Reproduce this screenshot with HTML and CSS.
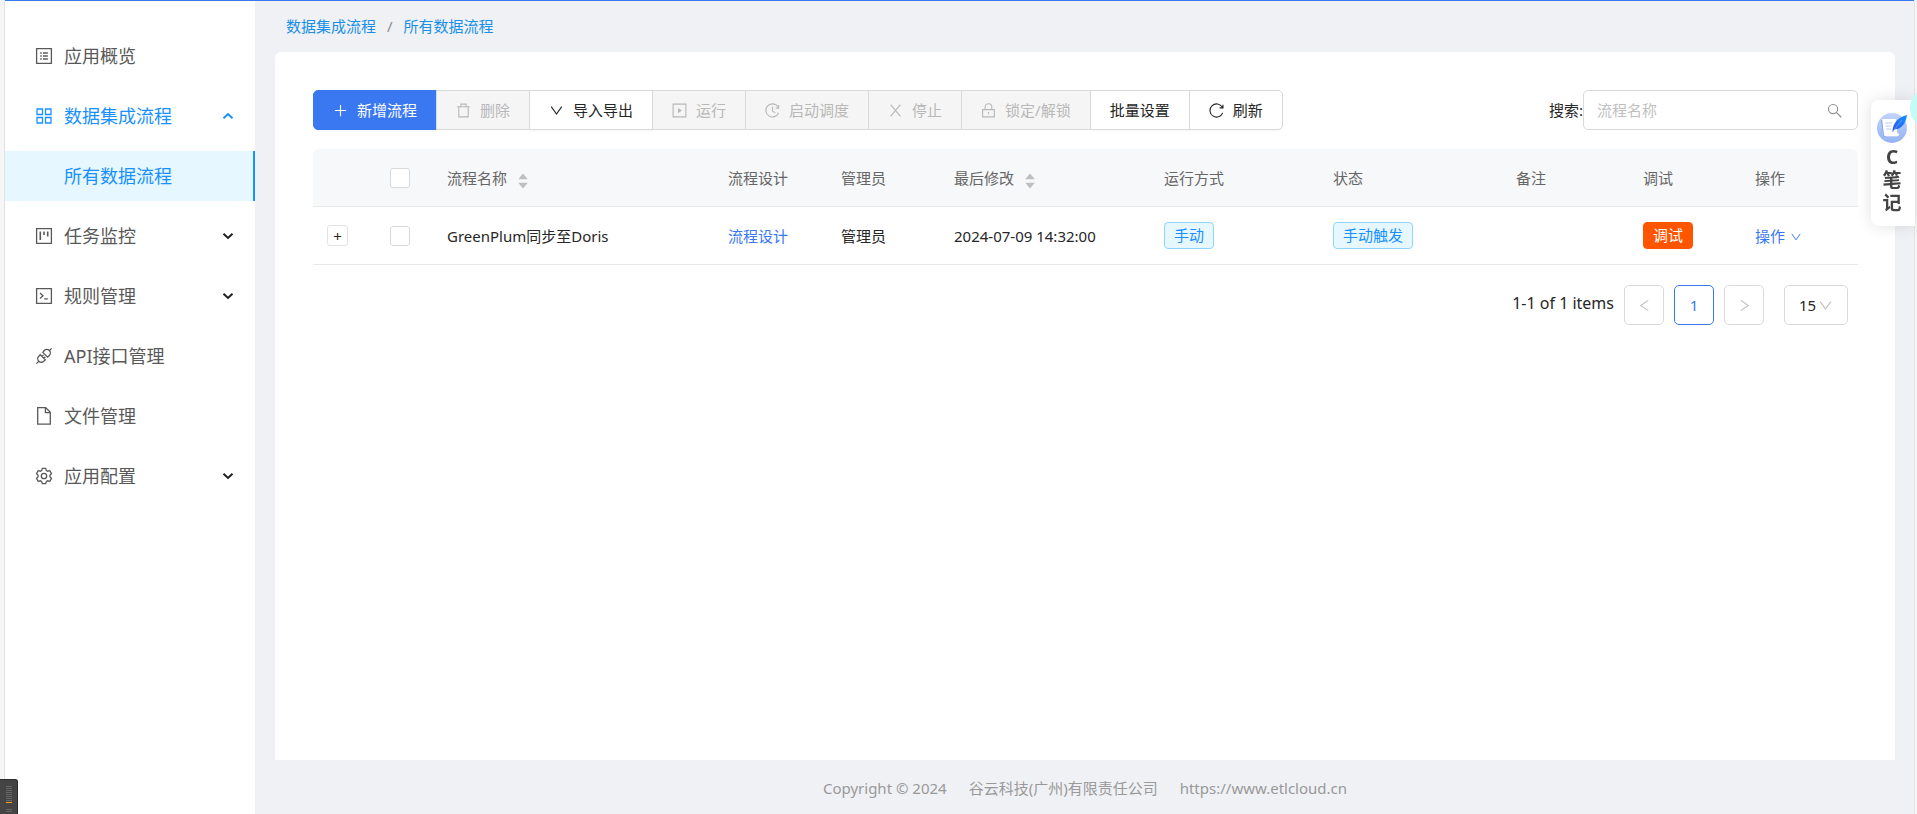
FILE: index.html
```html
<!DOCTYPE html>
<html lang="zh-CN">
<head>
<meta charset="utf-8">
<title>所有数据流程</title>
<link rel="stylesheet" href="styles.css">
</head>
<body>
<svg class="sprite" aria-hidden="true">
  <symbol id="i-profile" viewBox="0 0 16 16"><path d="M.6.6h14.8v14.8H.6z"/><path d="M4.2 5h1.5M4.2 8h1.5M4.2 11h1.5M7 5h4.8M7 8h4.8M7 11h4.8"/></symbol>
  <symbol id="i-grid" viewBox="0 0 16 16"><path d="M1 1h5.5v5.5H1zM9.5 1H15v5.500H9.500zM1 9.500h5.500V15H1zM9.500 9.500H15V15H9.500z"/></symbol>
  <symbol id="i-project" viewBox="0 0 16 16"><path d="M.6.6h14.8v14.8H.6z"/><path d="M4.3 3.5v8.5M8 3.5v3.5M11.7 3.5v5" stroke-width="1.6"/></symbol>
  <symbol id="i-code" viewBox="0 0 16 16"><path d="M.6.6h14.8v14.8H.6z"/><path d="M4 5l3 2.8-3 2.8M8.2 10.8h3.6"/></symbol>
  <symbol id="i-api" viewBox="0 0 16 16"><path d="M.4 15.6l2.3-2.3M13.3 2.7L15.6.4M4.3 6.7l5 5-1.5 1.5a3.5 3.5 0 0 1-5-5zM6.8 4.4l4.8 4.8 1.7-1.7a3.5 3.5 0 0 0-5-5zM6 8.4l1.5-1.5M7.8 10.2l1.5-1.5"/></symbol>
  <symbol id="i-file" viewBox="0 0 16 16"><path d="M1.700-.4h8l4.600 4.600v12H1.700zM9.400-.2v4.800h4.800"/></symbol>
  <symbol id="i-gear" viewBox="0 0 16 16"><path d="M6.300.3h3.400l.6 2.100 1.300.8 2.200-.5 1.700 2.900L13.900 7.200v1.600l1.600 1.600-1.700 2.900-2.200-.5-1.300.8-.6 2.100H6.300l-.6-2.100-1.300-.8-2.200.5L.5 10.400l1.600-1.600V7.200L.5 5.600l1.700-2.900 2.200.5 1.300-.8z"/><circle cx="8" cy="8" r="2.700"/></symbol>
  <symbol id="i-plus" viewBox="0 0 16 16"><path d="M8 2v12M2 8h12"/></symbol>
  <symbol id="i-trash" viewBox="0 0 16 16"><path d="M1.2 4h13.6M3 4v10.8h10V4M5.2 4V1.2h5.6V4"/></symbol>
  <symbol id="i-down" viewBox="0 0 16 16"><path d="M2.4 3.8L8 11.8l5.6-8"/></symbol>
  <symbol id="i-play" viewBox="0 0 16 16"><path d="M1.2 1.2h13.6v13.6H1.2z"/><path d="M6.4 5.2v5.6L10.6 8z" fill="currentColor" stroke="none"/></symbol>
  <symbol id="i-clock" viewBox="0 0 16 16"><path d="M13.9 4.2A7 7 0 1 0 14.5 10.400M14.6 2v3.4h-3.2M8 4v4.500l3 2"/></symbol>
  <symbol id="i-close" viewBox="0 0 16 16"><path d="M2.800 1.800l10.400 12.400M13.200 1.800L2.800 14.200"/></symbol>
  <symbol id="i-lock" viewBox="0 0 16 16"><path d="M1.700 7h12.600v7.800H1.700zM4.500 7V4a3.500 3.200 0 0 1 7 0v3M8 9.500v2.500"/></symbol>
  <symbol id="i-reload" viewBox="0 0 16 16"><path d="M14.200 4.600A7 7 0 1 0 14.600 10.500M14.900 1.800v3.400h-3.600"/></symbol>
  <symbol id="i-search" viewBox="0 0 16 16"><circle cx="6.500" cy="6.500" r="4.900"/><path d="M10.200 10.200l5 5"/></symbol>
  <symbol id="i-left" viewBox="0 0 16 16"><path d="M12 2.500L4 8l8 5.500"/></symbol>
  <symbol id="i-right" viewBox="0 0 16 16"><path d="M4 2.500L12 8l-8 5.500"/></symbol>
  <symbol id="i-chevron" viewBox="0 0 12 12"><path d="M1.500 3.800L6 8l4.500-4.200" stroke-width="2"/></symbol>
  <symbol id="i-sort" viewBox="0 0 10 16"><path d="M5 .5L9.800 6.200H.2zM5 15.500L.2 9.800h9.600z" fill="currentColor" stroke="none"/></symbol>
</svg>

<div class="app">
  <aside class="sidebar">
    <nav class="menu">
      <a class="menu-item" href="#"><svg class="icon"><use href="#i-profile"/></svg>应用概览</a>
      <a class="menu-item open" href="#"><svg class="icon"><use href="#i-grid"/></svg>数据集成流程<svg class="chevron up"><use href="#i-chevron"/></svg></a>
      <a class="menu-item sub active" href="#">所有数据流程</a>
      <a class="menu-item" href="#"><svg class="icon"><use href="#i-project"/></svg>任务监控<svg class="chevron"><use href="#i-chevron"/></svg></a>
      <a class="menu-item" href="#"><svg class="icon"><use href="#i-code"/></svg>规则管理<svg class="chevron"><use href="#i-chevron"/></svg></a>
      <a class="menu-item" href="#"><svg class="icon"><use href="#i-api"/></svg>API接口管理</a>
      <a class="menu-item" href="#"><svg class="icon"><use href="#i-file"/></svg>文件管理</a>
      <a class="menu-item" href="#"><svg class="icon"><use href="#i-gear"/></svg>应用配置<svg class="chevron"><use href="#i-chevron"/></svg></a>
    </nav>
  </aside>

  <main class="main">
    <div class="breadcrumb"><a href="#">数据集成流程</a><span>/</span><a href="#">所有数据流程</a></div>

    <section class="card">
      <div class="toolbar">
        <div class="btn-group">
          <button class="btn primary" type="button"><svg class="icon"><use href="#i-plus"/></svg>新增流程</button>
          <button class="btn" type="button" disabled><svg class="icon"><use href="#i-trash"/></svg>删除</button>
          <button class="btn" type="button"><svg class="icon"><use href="#i-down"/></svg>导入导出</button>
          <button class="btn" type="button" disabled><svg class="icon"><use href="#i-play"/></svg>运行</button>
          <button class="btn" type="button" disabled><svg class="icon"><use href="#i-clock"/></svg>启动调度</button>
          <button class="btn" type="button" disabled><svg class="icon"><use href="#i-close"/></svg>停止</button>
          <button class="btn" type="button" disabled><svg class="icon"><use href="#i-lock"/></svg>锁定/解锁</button>
          <button class="btn" type="button">批量设置</button>
          <button class="btn" type="button"><svg class="icon"><use href="#i-reload"/></svg>刷新</button>
        </div>
        <div class="search">
          <label for="q">搜索:</label>
          <div class="search-box"><input id="q" type="text" placeholder="流程名称"><svg class="icon"><use href="#i-search"/></svg></div>
        </div>
      </div>

      <table class="table">
        <colgroup><col class="c-expand"><col class="c-check"><col class="c-name"><col class="c-design"><col class="c-admin"><col class="c-date"><col class="c-mode"><col class="c-state"><col class="c-note"><col class="c-debug"><col class="c-action"></colgroup>
        <thead>
          <tr>
            <th></th>
            <th><input class="check" type="checkbox" aria-label="全选"></th>
            <th>流程名称<svg class="sort"><use href="#i-sort"/></svg></th>
            <th>流程设计</th><th>管理员</th>
            <th>最后修改<svg class="sort"><use href="#i-sort"/></svg></th>
            <th>运行方式</th><th>状态</th><th>备注</th><th>调试</th><th>操作</th>
          </tr>
        </thead>
        <tbody>
          <tr>
            <td><button class="expand" type="button">+</button></td>
            <td><input class="check" type="checkbox" aria-label="选择"></td>
            <td>GreenPlum同步至Doris</td>
            <td><a href="#">流程设计</a></td>
            <td>管理员</td>
            <td>2024-07-09 14:32:00</td>
            <td><span class="tag">手动</span></td>
            <td><span class="tag">手动触发</span></td>
            <td></td>
            <td><button class="tag debug" type="button">调试</button></td>
            <td><a href="#">操作<svg class="caret"><use href="#i-down"/></svg></a></td>
          </tr>
        </tbody>
      </table>

      <div class="pagination">
        <span class="total">1-1 of 1 items</span>
        <button class="page" type="button" disabled aria-label="上一页"><svg class="icon"><use href="#i-left"/></svg></button>
        <button class="page current" type="button">1</button>
        <button class="page" type="button" disabled aria-label="下一页"><svg class="icon"><use href="#i-right"/></svg></button>
        <div class="size"><select aria-label="每页条数"><option>15</option></select><svg class="icon"><use href="#i-down"/></svg></div>
      </div>
    </section>

    <footer class="footer"><span>Copyright © 2024</span><span>谷云科技(广州)有限责任公司</span><span>https://www.etlcloud.cn</span></footer>
  </main>
</div>

<button class="note" type="button">
  <svg class="note-logo" viewBox="0 0 30 30">
    <defs>
      <linearGradient id="g1" x1="0" y1="0" x2="0" y2="1"><stop offset="0" stop-color="#c3d4fb"/><stop offset="1" stop-color="#93b3f4"/></linearGradient>
      <linearGradient id="g2" x1="1" y1="0" x2="0" y2="1"><stop offset="0" stop-color="#1596ff"/><stop offset="1" stop-color="#2e4fe8"/></linearGradient>
    </defs>
    <circle cx="15" cy="15" r="15" fill="url(#g1)"/>
    <path d="M4 7h14l3 14c0 2 1 2.500 0 3H9c-2 0-2.500-1-2.700-3z" fill="#7d9eea"/>
    <path d="M5 6h14l1.500 14 1.500 1c0 2-1 2.500-2 2.500H9.500c-2 0-2.500-1-2.700-3z" fill="#fff"/>
    <path d="M8 10h7M8.500 13h6M9 16h5" stroke="#b9ccf8" fill="none"/>
    <path d="M15.500 19c0-8 5-15 14.500-17-1 8-5 14-12.500 14.500z" fill="url(#g2)"/>
    <path d="M15.500 19L25 7" stroke="#6db7ff" stroke-width=".7"/>
  </svg>
  <span>C</span><span>笔</span><span>记</span>
</button>
<div class="bubble"></div>
<div class="meter"><i></i><i></i><i></i><i></i><i></i><i></i><i></i><i></i><i class="hot"></i><i class="gap"></i><i></i><i></i></div>
</body>
</html>
```
FILE: styles.css
```css
* { box-sizing: border-box; }
body {
  margin: 0;
  background: #f6f6f6;
  color: #262626;
  font: 15px/24px "Noto Sans", "Noto Sans CJK SC", sans-serif;
  overflow: hidden;
}
a { color: #3a78f2; text-decoration: none; }
button, input, select { font: inherit; color: inherit; margin: 0; }
svg { fill: none; stroke: currentColor; flex: none; }
symbol { overflow: visible; }
.sprite { display: none; }
.icon { width: 15px; height: 15px; stroke-width: 1.2; }

.app {
  display: flex;
  min-height: 100vh;
  margin: 0 2px 0 4px;
  border: solid #e3e3e3;
  border-width: 0 1px;
}
.sidebar { width: 250px; flex: none; background: #fff; border-top: 1px solid #3a78f2; }
.menu { display: flex; flex-direction: column; gap: 10px; padding-top: 30px; }
.menu-item {
  display: flex;
  align-items: center;
  height: 50px;
  padding: 0 21px 0 31px;
  color: #595959;
  font-size: 18px;
}
.menu-item .icon { width: 16px; height: 16px; margin-right: 12px; overflow: visible; stroke-width: 1.3; }
.menu-item .chevron { width: 12px; height: 12px; margin-left: auto; color: #1f1f1f; }
.menu-item .chevron.up { transform: rotate(180deg); color: #1890ff; }
.menu-item.open { color: #1890ff; }
.menu-item.sub { padding-left: 59px; }
.menu-item.active { color: #1890ff; background: #e6f7ff; border-right: 2px solid #1890ff; }

.main {
  flex: 1;
  min-width: 0;
  display: flex;
  flex-direction: column;
  padding: 0 19px 0 20px;
  background: #f0f1f5;
  border-top: 1px solid #3a78f2;
}
.breadcrumb { display: flex; align-items: center; gap: 11px; height: 51px; padding: 0 11px 2px; color: #8c8c8c; }
.breadcrumb a { color: #1890e8; }
.card { flex: 1; padding: 38px 37px 38px 38px; background: #fff; border-radius: 6px 6px 0 0; }

.toolbar { display: flex; justify-content: space-between; }
.btn-group { display: flex; }
.btn {
  display: flex;
  align-items: center;
  gap: 9px;
  height: 40px;
  padding: 0 19px;
  background: #fff;
  border: 1px solid #d9d9d9;
  box-shadow: 0 2px 0 rgba(0, 0, 0, .02);
  white-space: nowrap;
}
.btn + .btn { margin-left: -1px; }
.btn:first-child { border-radius: 5px 0 0 5px; }
.btn:last-child { border-radius: 0 5px 5px 0; }
.btn:disabled { color: #b8b8b8; background: #f5f5f5; box-shadow: none; }
.btn.primary { color: #fff; background: #3a78f2; border-color: #3a78f2; }

.search { display: flex; align-items: center; }
.search-box { display: flex; align-items: center; width: 275px; height: 40px; padding: 0 15px 0 13px; border: 1px solid #d9d9d9; border-radius: 5px; color: #8c8c8c; }
.search-box input { flex: 1; min-width: 0; padding: 0; border: 0; outline: 0; background: none; color: #262626; }
.search-box input::placeholder { color: #bfbfbf; opacity: 1; }

.table { width: 100%; margin-top: 19px; border-collapse: separate; border-spacing: 0; table-layout: fixed; }
.table th, .table td { height: 58px; padding: 0 10px; border-bottom: 1px solid #e8e8e8; text-align: left; vertical-align: middle; white-space: nowrap; font-weight: 400; }
.table th { color: #666; background: #f7f8fa; }
.table th:first-child { border-top-left-radius: 6px; }
.table th:last-child { border-top-right-radius: 6px; }
.table td:first-child { padding-left: 14px; }
.c-expand { width: 67px; }
.c-check { width: 57px; }
.c-name { width: 281px; }
.c-design, .c-admin, .c-action { width: 113px; }
.c-date { width: 210px; }
.c-mode { width: 169px; }
.c-state { width: 183px; }
.c-note { width: 127px; }
.c-debug { width: 112px; }
.check { appearance: none; display: block; width: 20px; height: 20px; border: 1px solid #d9d9d9; border-radius: 3px; background: #fff; }
.expand { display: flex; align-items: center; justify-content: center; width: 21px; height: 21px; padding: 0; border: 1px solid #e3e3e3; border-radius: 3px; background: #fff; }
.sort { width: 10px; height: 16px; margin-left: 11px; color: #bfbfbf; vertical-align: -5px; }
.tag { display: inline-block; height: 27px; padding: 0 9px; line-height: 25px; color: #1890ff; background: #e6f7ff; border: 1px solid #91d5ff; border-radius: 4px; vertical-align: middle; }
.tag.debug { color: #fff; background: #ff5500; border-color: #ff5500; }
.caret { width: 12px; height: 12px; margin-left: 5px; vertical-align: -1px; stroke-width: 1.3; }

.pagination { display: flex; justify-content: flex-end; gap: 10px; padding: 20px 10px 0 0; }
.total { font-size: 16px; line-height: 36px; }
.page { display: flex; align-items: center; justify-content: center; width: 40px; height: 40px; padding: 0; background: #fff; border: 1px solid #d9d9d9; border-radius: 5px; }
.page:disabled { color: #bfbfbf; }
.page.current { color: #3a78f2; border-color: #3a78f2; }
.size { display: flex; align-items: center; width: 64px; height: 40px; margin-left: 10px; padding: 0 14px; border: 1px solid #d9d9d9; border-radius: 5px; color: #bfbfbf; }
.size select { appearance: none; width: 19px; padding: 0; border: 0; background: none; color: #262626; }

.footer { display: flex; justify-content: center; gap: 22px; height: 54px; padding-top: 16px; color: #999; }

.note {
  position: fixed;
  top: 100px;
  right: 2px;
  display: flex;
  flex-direction: column;
  align-items: center;
  width: 44px;
  height: 126px;
  padding: 13px 2px 0 0;
  color: #444;
  background: #fff;
  border: 0;
  border-radius: 8px 0 0 8px;
  box-shadow: 0 0 16px rgba(0, 0, 0, .12);
  font-size: 19px;
  font-weight: 700;
  line-height: 23px;
}
.note-logo { width: 30px; height: 30px; margin-bottom: 3px; stroke: none; }
.bubble { position: fixed; top: 90px; right: -23px; width: 30px; height: 36px; border-radius: 50%; background: #c4fbf6; }
.meter {
  position: fixed;
  left: 0;
  bottom: 0;
  display: flex;
  flex-direction: column;
  gap: 1px;
  width: 18px;
  height: 35px;
  padding: 6px 5px 0 6px;
  overflow: hidden;
  background: #444;
  border: solid #2b2b2b;
  border-width: 1px 1px 0 0;
  border-radius: 0 3px 0 0;
}
.meter i { flex: none; height: 1px; background: #666; }
.meter .hot { background: #ffa51f; }
.meter .gap { height: 4px; background: none; }
```
